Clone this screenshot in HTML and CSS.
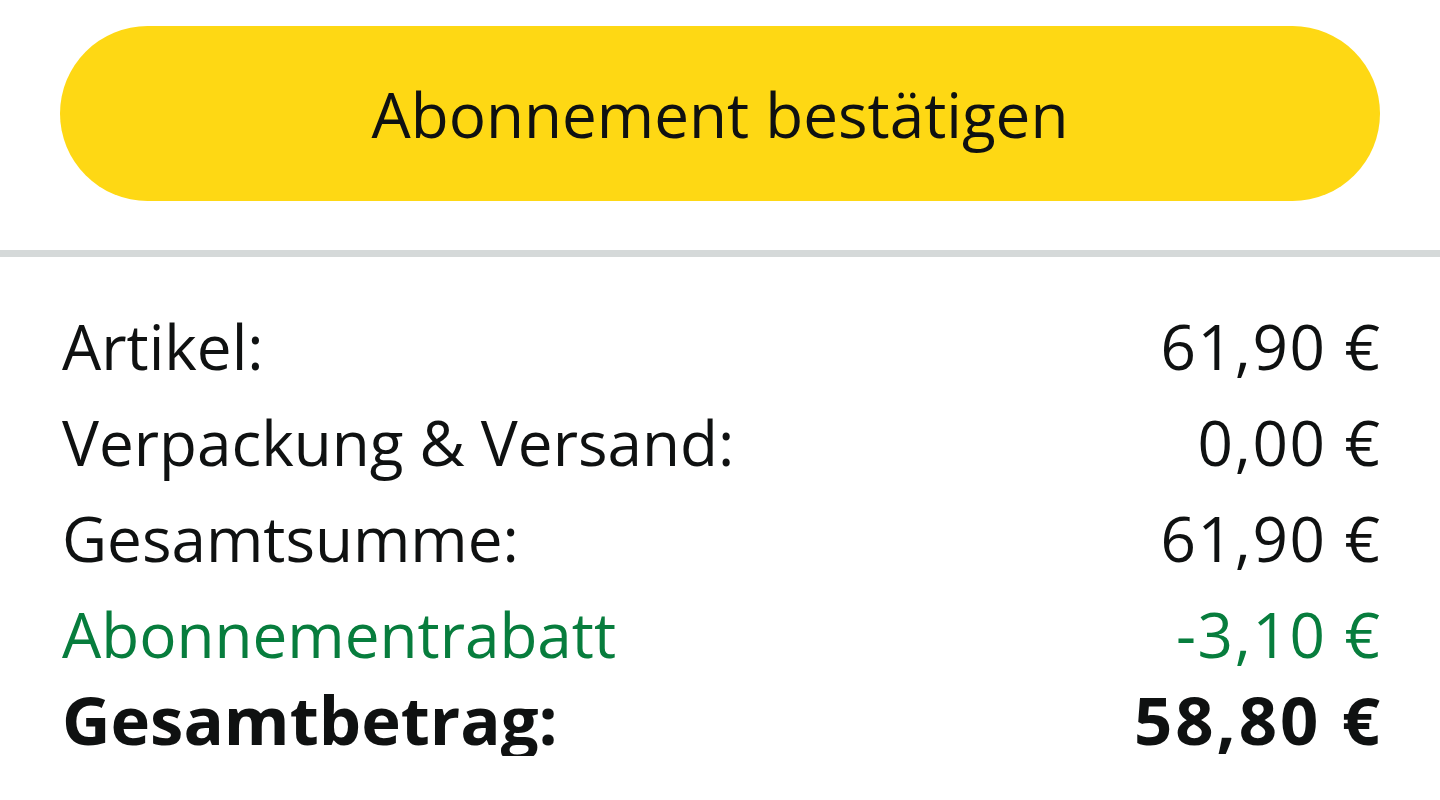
FILE: index.html
```html
<!DOCTYPE html>
<html lang="de">
<head>
<meta charset="utf-8">
<title>Abonnement</title>
<link rel="stylesheet" href="styles.css">
</head>
<body>
<div class="action">
  <button class="confirm" type="button">Abonnement bestätigen</button>
</div>
<div class="divider"></div>
<div class="summary">
  <div class="row"><span>Artikel:</span><span class="amount">61,90 €</span></div>
  <div class="row"><span>Verpackung &amp; Versand:</span><span class="amount">0,00 €</span></div>
  <div class="row"><span>Gesamtsumme:</span><span class="amount">61,90 €</span></div>
  <div class="row discount"><span>Abonnementrabatt</span><span class="amount">-3,10 €</span></div>
  <div class="row total"><span>Gesamtbetrag:</span><span class="amount">58,80 €</span></div>
</div>
</body>
</html>
```
FILE: styles.css
```css
html, body {
  margin: 0;
  padding: 0;
  background: #ffffff;
}
body {
  font-family: "Open Sans", "Noto Sans", sans-serif;
  color: #0f1111;
}
.action {
  padding: 26px 60px 0;
}
.confirm {
  display: flex;
  align-items: center;
  justify-content: center;
  width: 100%;
  height: 175px;
  border: none;
  border-radius: 88px;
  background: #fed814;
  color: #0f1111;
  font-family: inherit;
  font-size: 62px;
  font-weight: 500;
  padding: 0;
}
.divider {
  margin-top: 49px;
  height: 7px;
  background: #d5d9d9;
}
.summary {
  padding: 41px 60px 0 62px;
}
.row {
  display: flex;
  justify-content: space-between;
  font-size: 62px;
  font-weight: 500;
  line-height: 96px;
}
.amount {
  letter-spacing: 1.7px;
  margin-right: -1.7px;
}
.discount {
  color: #077d3d;
}
.total {
  font-weight: 700;
  font-size: 67px;
  line-height: 74px;
}
.total .amount {
  letter-spacing: 3px;
  margin-right: -3px;
}
```
